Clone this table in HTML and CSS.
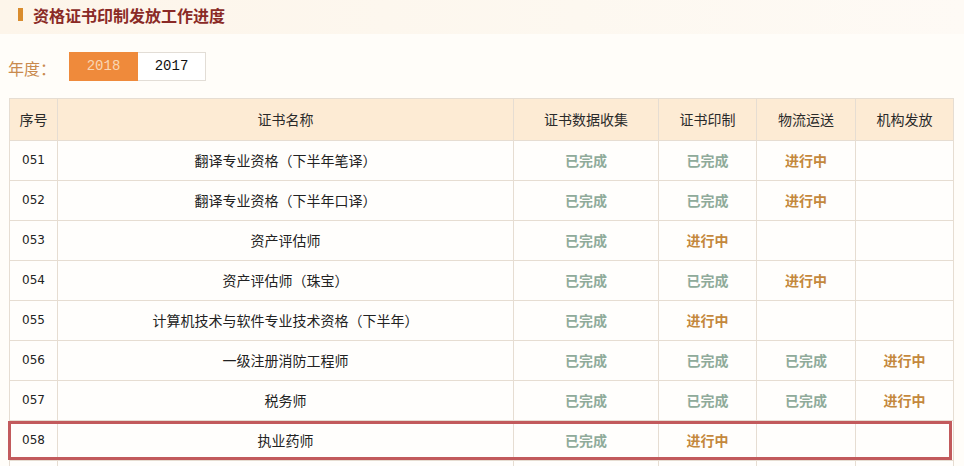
FILE: index.html
```html
<!DOCTYPE html>
<html lang="zh">
<head>
<meta charset="utf-8">
<link rel="stylesheet" href="styles.css">
</head>
<body>
<div class="page">
  <header class="title-bar">
    <span class="title-mark"></span>
    <h1 class="title">资格证书印制发放工作进度</h1>
  </header>
  <div class="year-row">
    <span class="year-label">年度：</span>
    <div class="year-tabs">
      <span class="year-tab active">2018</span>
      <span class="year-tab">2017</span>
    </div>
  </div>
  <div class="table-wrap">
    <table class="progress">
      <colgroup>
        <col class="c-no"><col class="c-name"><col class="c-data"><col class="c-print"><col class="c-ship"><col class="c-issue">
      </colgroup>
      <thead>
        <tr><th>序号</th><th>证书名称</th><th>证书数据收集</th><th>证书印制</th><th>物流运送</th><th>机构发放</th></tr>
      </thead>
      <tbody>
        <tr><td class="no">051</td><td>翻译专业资格（下半年笔译）</td><td class="done">已完成</td><td class="done">已完成</td><td class="doing">进行中</td><td></td></tr>
        <tr><td class="no">052</td><td>翻译专业资格（下半年口译）</td><td class="done">已完成</td><td class="done">已完成</td><td class="doing">进行中</td><td></td></tr>
        <tr><td class="no">053</td><td>资产评估师</td><td class="done">已完成</td><td class="doing">进行中</td><td></td><td></td></tr>
        <tr><td class="no">054</td><td>资产评估师（珠宝）</td><td class="done">已完成</td><td class="done">已完成</td><td class="doing">进行中</td><td></td></tr>
        <tr><td class="no">055</td><td>计算机技术与软件专业技术资格（下半年）</td><td class="done">已完成</td><td class="doing">进行中</td><td></td><td></td></tr>
        <tr><td class="no">056</td><td>一级注册消防工程师</td><td class="done">已完成</td><td class="done">已完成</td><td class="done">已完成</td><td class="doing">进行中</td></tr>
        <tr><td class="no">057</td><td>税务师</td><td class="done">已完成</td><td class="done">已完成</td><td class="done">已完成</td><td class="doing">进行中</td></tr>
        <tr><td class="no">058</td><td>执业药师</td><td class="done">已完成</td><td class="doing">进行中</td><td></td><td></td></tr>
        <tr><td class="no"></td><td></td><td></td><td></td><td></td><td></td></tr>
      </tbody>
    </table>
    <div class="highlight"></div>
  </div>
</div>
</body>
</html>
```
FILE: styles.css
```css
html, body {
  margin: 0;
  padding: 0;
}
body {
  width: 964px;
  height: 466px;
  overflow: hidden;
  background: #fffdf9;
  font-family: "Noto Sans CJK SC", "Noto Sans", sans-serif;
}
.page {
  display: flex;
  flex-direction: column;
}
.title-bar {
  height: 34px;
  display: flex;
  align-items: center;
  padding-left: 18px;
  background: linear-gradient(90deg, #fdf5ea 0%, #fdf8f0 60%, #fefaf5 100%);
  box-sizing: border-box;
  padding-bottom: 5px;
}
.title-mark {
  width: 5px;
  height: 13px;
  background: #d98c2e;
  margin-right: 10px;
}
.title {
  margin: 0;
  font-size: 16px;
  font-weight: 700;
  color: #8a2a26;
  letter-spacing: 0;
  line-height: 20px;
}
.year-row {
  display: flex;
  align-items: center;
  height: 30px;
  margin-top: 17px;
  padding-left: 8px;
}
.year-label {
  font-size: 16px;
  color: #c98a4e;
  width: 61px;
  line-height: 20px;
  padding-top: 3px;
}
.year-tabs {
  display: flex;
  height: 29px;
}
.year-tab {
  width: 68px;
  box-sizing: border-box;
  display: flex;
  align-items: center;
  justify-content: center;
  font-family: "Liberation Mono", monospace;
  font-size: 14px;
  color: #111;
  background: #fff;
  border: 1px solid #e2ddd6;
  border-left: none;
}
.year-tab.active {
  width: 69px;
  background: #ef8a3b;
  color: #f8d6b4;
  border: 1px solid #ef8a3b;
}
.table-wrap {
  position: relative;
  margin-top: 17px;
  margin-left: 9px;
  width: 944px;
}
.progress {
  width: 944px;
  border-collapse: collapse;
  table-layout: fixed;
  background: #fffefc;
}
.c-no { width: 48px; }
.c-name { width: 456px; }
.c-data { width: 145px; }
.c-print { width: 98px; }
.c-ship { width: 99px; }
.c-issue { width: 98px; }
.progress th, .progress td {
  border: 1px solid #e6ddd2;
  text-align: center;
  padding: 0 0 2px 0;
  font-size: 14px;
  color: #222;
}
.progress th {
  height: 39px;
  background: #fdebd4;
  font-weight: 400;
  color: #2a2a2a;
}
.progress td {
  height: 37px;
}
.progress td.no {
  font-family: "DejaVu Sans", "Liberation Sans", sans-serif;
  font-size: 12px;
  color: #222;
}
.progress td.done {
  color: #8fab9a;
  font-weight: 700;
}
.progress td.doing {
  color: #c4883d;
  font-weight: 700;
}
.highlight {
  position: absolute;
  left: -1px;
  top: 323px;
  width: 944px;
  height: 39px;
  border: 3px solid #c25a5c;
  box-sizing: border-box;
  pointer-events: none;
}
```
